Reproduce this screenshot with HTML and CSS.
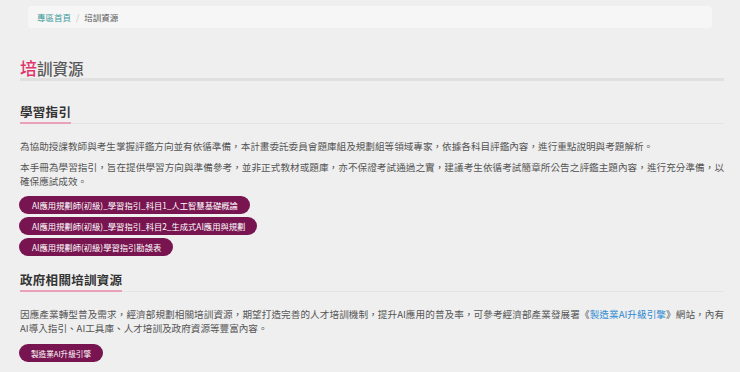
FILE: index.html
```html
<!DOCTYPE html>
<html lang="zh-Hant">
<head>
  <meta charset="UTF-8" />
  <meta name="viewport" content="width=device-width, initial-scale=1.0"/>
  <title>培訓資源</title>
  <link rel="stylesheet" href="styles.css">
</head>
<body>
  <nav class="breadcrumb">
    <a href="#" class="crumb-link">專區首頁</a>
    <span class="crumb-sep">/</span>
    <span class="crumb-current">培訓資源</span>
  </nav>

  <h1 class="page-title"><span class="first-char">培</span>訓資源</h1>

  <section class="block">
    <h2 class="block-title"><span>學習指引</span></h2>
    <p class="text first">為協助授課教師與考生掌握評鑑方向並有依循準備，本計畫委託委員會題庫組及規劃組等領域專家，依據各科目評鑑內容，進行重點說明與考題解析。</p>
    <p class="text">本手冊為學習指引，旨在提供學習方向與準備參考，並非正式教材或題庫，亦不保證考試通過之實，建議考生依循考試簡章所公告之評鑑主題內容，進行充分準備，以確保應試成效。</p>
    <div class="btn-list">
      <a href="#" class="pill">AI應用規劃師(初級)_學習指引_科目1_人工智慧基礎概論</a>
      <a href="#" class="pill">AI應用規劃師(初級)_學習指引_科目2_生成式AI應用與規劃</a>
      <a href="#" class="pill">AI應用規劃師(初級)學習指引勘誤表</a>
    </div>
  </section>

  <section class="block second">
    <h2 class="block-title"><span>政府相關培訓資源</span></h2>
    <p class="text first">因應產業轉型普及需求，經濟部規劃相關培訓資源，期望打造完善的人才培訓機制，提升AI應用的普及率，可參考經濟部產業發展署《<a href="#" class="inline-link">製造業AI升級引擎</a>》網站，內有AI導入指引、AI工具庫、人才培訓及政府資源等豐富內容。</p>
    <div class="btn-list">
      <a href="#" class="pill small">製造業AI升級引擎</a>
    </div>
  </section>
</body>
</html>
```

FILE: styles.css
```css
* {
  margin: 0;
  padding: 0;
  box-sizing: border-box;
}

body {
  font-family: "Noto Sans CJK TC", "Noto Sans", sans-serif;
  background: #efefef;
  color: #555555;
  padding: 0 16px 0 20px;
  text-spacing-trim: space-all;
}

a {
  text-decoration: none;
}

/* Breadcrumb */
.breadcrumb {
  display: flex;
  align-items: center;
  height: 22px;
  margin: 6px 12px 0 8px;
  padding: 0 9px;
  background: #f6f6f6;
  border-radius: 4px;
  font-size: 8.5px;
}

.crumb-link {
  color: #3d9a9c;
}

.crumb-sep {
  color: #c4c4c4;
  padding: 0 5px;
}

.crumb-current {
  color: #555555;
}

/* Page title */
.page-title {
  margin-top: 30px;
  font-size: 15.5px;
  font-weight: 500;
  line-height: 19px;
  color: #585858;
  border-bottom: 3px solid #e0e0e0;
}

.first-char {
  color: #e0336b;
  font-size: 17px;
}

/* Sections */
.block-title {
  display: flex;
  margin-top: 23px;
  font-size: 12.5px;
  font-weight: 700;
  letter-spacing: 0.3px;
  color: #333333;
  border-bottom: 1px solid #e4e4e4;
}

.block-title span {
  line-height: 16px;
  padding-bottom: 2px;
  border-bottom: 2px solid #e9a2b8;
  margin-bottom: -1px;
}

.second .block-title {
  margin-top: 16px;
}

.text {
  font-size: 9.6px;
  line-height: 14px;
  margin-top: 7px;
  text-align: justify;
  color: #555555;
}

.text.first {
  margin-top: 15px;
}

.inline-link {
  color: #2f8bd2;
}

/* Pill buttons */
.btn-list {
  display: flex;
  flex-direction: column;
  align-items: flex-start;
  gap: 3px;
  margin-top: 8px;
  margin-left: -1px;
}

.second .btn-list {
  margin-top: 9px;
}

.pill {
  display: inline-flex;
  align-items: center;
  height: 18px;
  padding: 0 12px 0 13px;
  border-radius: 9px;
  background: #781550;
  color: #ffffff;
  font-size: 8.3px;
  white-space: nowrap;
}

.pill.small {
  font-size: 7.6px;
  padding: 0 12px;
}
```
